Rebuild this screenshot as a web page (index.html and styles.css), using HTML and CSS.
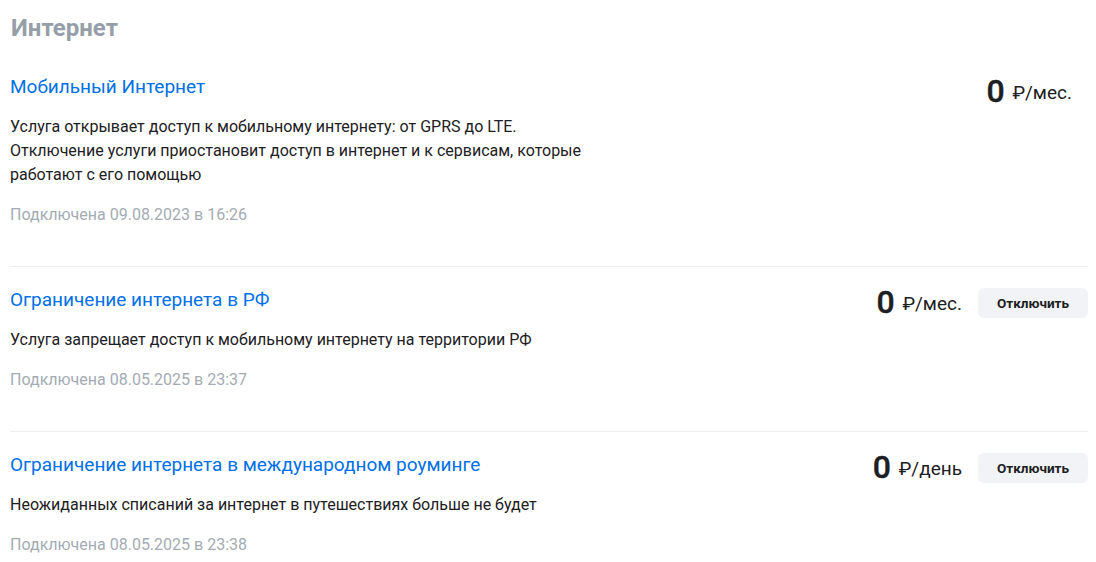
FILE: index.html
```html
<!DOCTYPE html>
<html lang="ru">
<head>
    <meta charset="UTF-8">
    <title>Интернет</title>
    <link rel="stylesheet" href="styles.css">
</head>
<body>
    <div class="services">
        <h2 class="services-title">Интернет</h2>

        <div class="service">
            <div class="service-info">
                <a class="service-name" href="#">Мобильный Интернет</a>
                <p class="service-desc">Услуга открывает доступ к мобильному интернету: от GPRS до LTE.<br>Отключение услуги приостановит доступ в интернет и к сервисам, которые работают с его помощью</p>
                <div class="service-date">Подключена 09.08.2023 в 16:26</div>
            </div>
            <div class="service-side">
                <div class="price price-solo"><span class="price-value">0</span> ₽/мес.</div>
            </div>
        </div>

        <div class="service">
            <div class="service-info">
                <a class="service-name" href="#">Ограничение интернета в РФ</a>
                <p class="service-desc">Услуга запрещает доступ к мобильному интернету на территории РФ</p>
                <div class="service-date">Подключена 08.05.2025 в 23:37</div>
            </div>
            <div class="service-side">
                <div class="price"><span class="price-value">0</span> ₽/мес.</div>
                <button class="off-btn">Отключить</button>
            </div>
        </div>

        <div class="service">
            <div class="service-info">
                <a class="service-name" href="#">Ограничение интернета в международном роуминге</a>
                <p class="service-desc">Неожиданных списаний за интернет в путешествиях больше не будет</p>
                <div class="service-date">Подключена 08.05.2025 в 23:38</div>
            </div>
            <div class="service-side">
                <div class="price"><span class="price-value">0</span> ₽/день</div>
                <button class="off-btn">Отключить</button>
            </div>
        </div>
    </div>
</body>
</html>
```

FILE: styles.css
```css
body {
    margin: 0;
    padding: 0;
    background-color: #fff;
    color: #1d2023;
    font-family: Roboto, "Noto Sans", sans-serif;
}
.services {
    padding: 0 8px 0 10px;
}
.services-title {
    margin: 0;
    padding: 13px 0 11px 1px;
    font-size: 24px;
    line-height: 30px;
    font-weight: 700;
    color: #969fa8;
}
.service {
    display: flex;
    justify-content: space-between;
    align-items: flex-start;
    padding: 21px 0 39px;
    border-bottom: 1px solid #eceef2;
}
.service:last-child {
    border-bottom: none;
}
.service-info {
    max-width: 600px;
}
.service-name {
    display: block;
    font-size: 19px;
    line-height: 24px;
    color: #0070e5;
    text-decoration: none;
}
.service-desc {
    margin: 16px 0 0;
    font-size: 16px;
    line-height: 24px;
}
.service-date {
    margin-top: 16px;
    font-size: 16px;
    line-height: 24px;
    color: #a4abb3;
}
.service-side {
    display: flex;
    align-items: center;
    gap: 16px;
    margin-top: -2px;
}
.price {
    font-size: 19px;
    line-height: 32px;
    color: #1d2023;
    white-space: nowrap;
}
.price-solo {
    margin-right: 16px;
    margin-top: 2px;
}
.price-value {
    font-size: 32px;
    font-weight: 500;
    -webkit-text-stroke: 0.4px #1d2023;
    vertical-align: -3px;
    margin-right: 3px;
}
.off-btn {
    width: 110px;
    height: 30px;
    border: none;
    border-radius: 6px;
    background-color: #f2f3f7;
    color: #1d2023;
    font-family: Roboto, "Noto Sans", sans-serif;
    font-size: 13.5px;
    font-weight: 700;
    cursor: pointer;
}
```
